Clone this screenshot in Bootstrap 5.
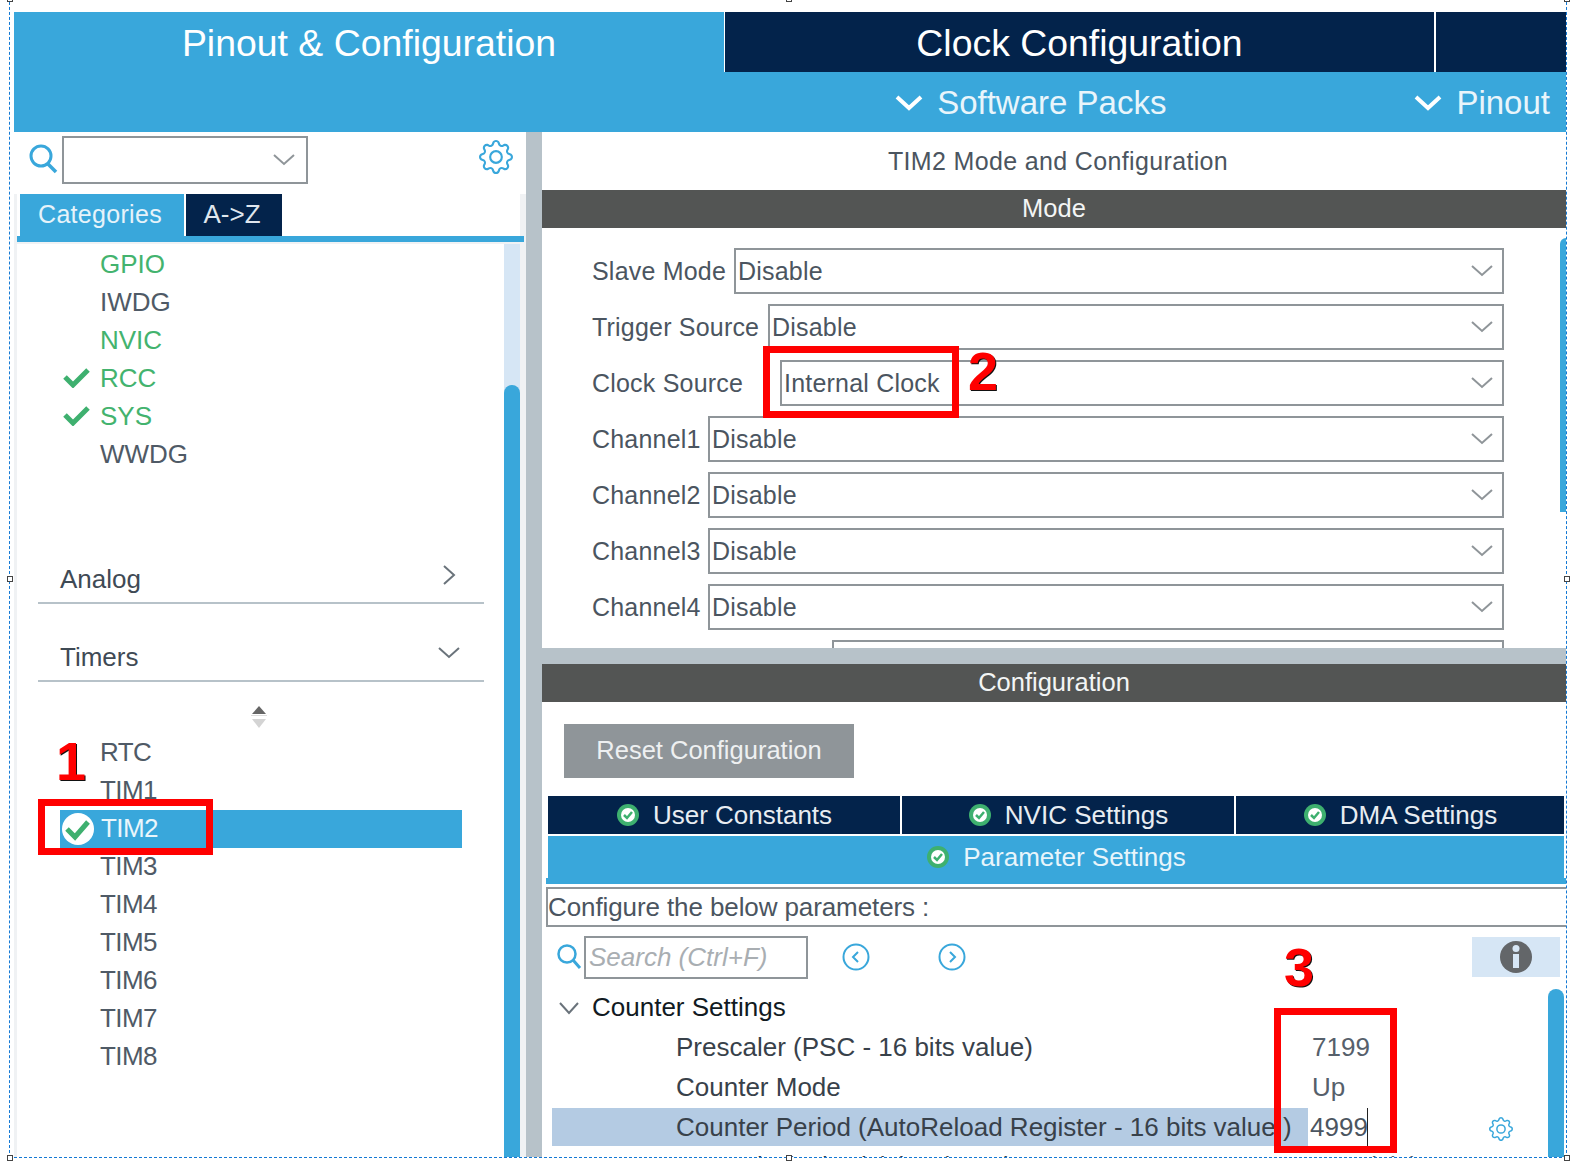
<!DOCTYPE html>
<html lang="en"><head><meta charset="utf-8"><title>STM32CubeMX TIM2</title>
<link href="https://cdn.jsdelivr.net/npm/bootstrap@5.3.0/dist/css/bootstrap.min.css" rel="stylesheet">
<style>
html,body{margin:0;height:1168px;background:#fff;overflow:hidden}
body{font-family:"Liberation Sans",Arial,sans-serif;font-size:26px;color:#4b5560;position:relative}
.appx{position:absolute;left:14px;top:12px;width:1552px;height:1145px;overflow:hidden}
.hdr-row{height:60px;flex:none}
.hdr-tab{font-size:37.4px;color:#fff;line-height:62px;text-align:center}
.hdr-a{width:710px;background:#39a7db}
.hdr-b{width:709px;margin-left:1px;background:#03234b}
.hdr-c{flex:1;margin-left:2px;background:#03234b}
.hdr-menu{background:#39a7db;color:#e9f5fb;font-size:33px;height:60px;flex:none;padding-top:1px}
.hdr-menu svg{width:28px;height:18px;margin-right:14px}
.mn1{margin-right:248px}.mn2{margin-right:16px}
.leftp{width:512px;border-left:3px solid #f0f2f4;border-right:6px solid #f0f2f4;height:1025px;background:#fff;flex:none}
.srch-row{height:62px;margin-left:-3px;margin-right:-6px;background:#fff;padding-left:14px}
.srch-ico{margin-top:11px}
.srch-box{width:246px;height:48px;border:2px solid #8f9599;margin-left:4px;margin-top:4px;padding-right:11px}
.gearx{fill:#39a7db}
.gear1{margin:8px 0 0 171px;width:34px;height:34px}
.tabs-l{height:42px;padding-left:3px}
.tab-cat{width:164px;background:#39a7db;color:#e6f3fa;font-size:25px;letter-spacing:.3px;line-height:40px;text-align:center;padding-right:4px}
.tab-az{width:96px;margin-left:2px;background:#03234b;color:#dfe6ee;font-size:26px;line-height:40px;text-align:center;padding-right:4px}
.tab-line{height:6px;background:#39a7db;margin-right:-4px}
.tab-gap{height:2px;background:#f0f2f4}
.listwrap{height:913px}
.listmain{flex:1;padding-top:0}
.scrollv{width:16px;background:#d6e6f5;flex:none}
.scrollv>div{height:772px;margin-top:141px;background:#39a7db;border-radius:8px 8px 0 0}
.li-x{height:38px;line-height:40px;font-size:26px;padding-left:83px;color:#4f5a66;position:relative}
.li-low{line-height:37px;letter-spacing:-.6px}
.li-g{color:#43b36e}
.li-x>svg{position:absolute;left:46px;top:8px;width:27px;height:22px}
.li-sel{background:#39a7db;color:#eaf6fb;margin-left:43px;width:402px;padding-left:41px}
.li-sel>svg{left:0;top:2px;width:36px;height:34px}
.sec-x{margin-left:21px;width:446px;border-bottom:2px solid #b7c2c9;font-size:26px;color:#3f4a55;height:45px;line-height:40px;padding:0 24px 3px 22px}
.sec-1{margin-top:87px}
.sec-2{margin-top:33px}
.sec-x svg{width:22px;height:22px;margin-bottom:8px}
.updown{height:36px;margin-top:22px;padding-right:3px}
.li-first{margin-top:-6px}
.split-v{width:16px;background:#b7c2c9;flex:none}
.rightp{flex:1;min-width:0}
.modep{height:516px;overflow:hidden}
.ttl{height:58px;line-height:58px;text-align:center;font-size:25px;letter-spacing:.35px;color:#4b5560;padding-left:8px}
.barx{height:38px;line-height:36px;background:#535554;color:#f3f5f5;text-align:center;font-size:25.500px}
.modebody{padding:20px 62px 0 50px;position:relative}
.frow{height:46px;margin-bottom:10px;letter-spacing:.2px;font-size:25px;white-space:nowrap}
.frow>span{flex:none;line-height:46px}
.selx{flex:1;border:2px solid #8f9599;padding:0 9px 0 2px;height:46px;line-height:42px}
.selx svg{width:22px;height:12px}
.w1{width:142px}.w2{width:176px}.w3{width:188px}.w4{width:116px}.w5{width:240px}
.vthumb{position:absolute;right:0;top:106px;width:6px;height:274px;background:#39a7db;border-radius:6px 0 0 0}
.split-h{height:16px;background:#b7c2c9}
.cfgbody{height:481px;overflow:hidden;position:relative}
.btnreset{width:290px;height:54px;margin:22px 0 18px 22px;background:#8f9599;color:#eef0f1;font-size:25.500px;line-height:52px;text-align:center}
.ctabs{height:38px;margin-left:6px;margin-right:2px;gap:2px}
.ctab{background:#03234b;color:#e8edf2;font-size:26px}
.ctab svg,.ptab svg{width:24px;height:24px;margin-right:13px}
.ct1{width:352px}.ct2{width:332px}.ct3{flex:1}
.ptab{height:42px;margin:2px 2px 0 6px;background:#39a7db;color:#e8f5fb;font-size:26px}
.pline{height:6px;background:#39a7db;margin-left:4px}
.cfgnote{height:40px;margin:3px 0 0 4px;border:2px solid #8f9599;border-right:0;line-height:36px;font-size:26px;letter-spacing:-.1px;color:#4b5560}
.srow{height:60px;padding-top:9px;padding-left:14px;position:relative}
.qs{width:28px;height:28px;margin-top:7px}
.sbox{width:224px;height:43px;border:2px solid #8f9599;color:#a9aeb2;font-style:italic;line-height:39px;padding-left:3px;font-size:26px}
.navc{width:30px;height:30px;margin-top:6px}
.nc1{margin-left:33px}.nc2{margin-left:66px}
.infob{position:absolute;right:6px;top:10px;width:88px;height:40px;background:#d6e6f5}
.infob svg{width:34px;height:34px}
.prow{height:40px;line-height:40px;padding-left:134px;position:relative;color:#38414a;font-size:26px;white-space:nowrap}
.prow .valx{position:absolute;left:770px;top:0;color:#56606b}
.prow-h{margin-left:10px;padding-left:124px;width:756px;background:#b4cbe3;height:38px;line-height:38px;margin-top:1px;margin-bottom:1px}
.prow-h .valx{left:756px;width:60px;background:#fff;color:#4b5560;height:38px;padding-left:2px}
.caretx{position:absolute;left:815px;top:0;width:1px;height:38px;background:#222}
.grp{padding-left:50px;color:#111a22}
.grp svg{position:absolute;left:16px;top:12px;width:22px;height:18px}
.prow-cut{margin-top:-1px}
.vthumb2{position:absolute;right:2px;top:287px;width:16px;height:200px;background:#39a7db;border-radius:8px 8px 0 0}
.gear2{position:absolute;left:947px;top:415px;width:24px;height:24px}
.redbox{position:absolute;border:7px solid #f00;pointer-events:none}
.rb1{left:38px;top:799px;width:175px;height:56px}
.rb2{left:763px;top:346px;width:196px;height:72px}
.rb3{left:1274px;top:1008px;width:123px;height:145px}
.numx{position:absolute;color:#f00;font-weight:700;font-size:54px;line-height:54px;text-shadow:1px 1px 0 #111}
.n1{left:56px;top:734px}.n2{left:968px;top:344px}.n3{left:1284px;top:940px}
.selfr{position:absolute;left:9px;top:-3px;width:1558px;height:1161px;border:1px dashed #1479d4;pointer-events:none}
.hdlx{position:absolute;width:6px;height:6px;border:1px solid #444;background:#fff}
.h1x{left:7px;top:1155px}.h2x{left:786px;top:1155px}.h3x{left:1564px;top:1155px}.h4x{left:7px;top:576px}.h5x{left:1564px;top:576px}.h6x{left:786px;top:-4px}.h7x{left:7px;top:-4px}.h8x{left:1564px;top:-4px}
</style></head><body>
<div class="appx d-flex flex-column">
  <div class="hdr-row d-flex">
    <div class="hdr-tab hdr-a">Pinout &amp; Configuration</div>
    <div class="hdr-tab hdr-b">Clock Configuration</div>
    <div class="hdr-tab hdr-c"></div>
  </div>
  <div class="hdr-menu d-flex align-items-center justify-content-end">
    <svg viewBox="0 0 28 18"><path d="M2 3l12 11L26 3" fill="none" stroke="#fff" stroke-width="4"/></svg><span class="mn1">Software Packs</span>
    <svg viewBox="0 0 28 18"><path d="M2 3l12 11L26 3" fill="none" stroke="#fff" stroke-width="4"/></svg><span class="mn2">Pinout</span>
  </div>
  <div class="d-flex flex-grow-1">
    <div class="leftp">
      <div class="srch-row d-flex align-items-start">
        <svg width="30" height="32" viewBox="0 0 30 32" class="srch-ico"><circle cx="13" cy="13" r="10" fill="none" stroke="#39a7db" stroke-width="3"/><path d="M20 21l8 8" stroke="#39a7db" stroke-width="3.5"/></svg>
        <div class="srch-box d-flex align-items-center justify-content-end"><svg width="22" height="12" viewBox="0 0 22 12"><path d="M1 1l10 9 10-9" fill="none" stroke="#8f9599" stroke-width="2"/></svg></div>
        <svg class="gearx gear1" viewBox="0 0 16 16"><path d="M8 4.754a3.246 3.246 0 1 0 0 6.492 3.246 3.246 0 0 0 0-6.492zM5.754 8a2.246 2.246 0 1 1 4.492 0 2.246 2.246 0 0 1-4.492 0z"/><path d="M9.796 1.343c-.527-1.79-3.065-1.79-3.592 0l-.094.319a.873.873 0 0 1-1.255.52l-.292-.16c-1.64-.892-3.433.902-2.54 2.541l.159.292a.873.873 0 0 1-.52 1.255l-.319.094c-1.79.527-1.79 3.065 0 3.592l.319.094a.873.873 0 0 1 .52 1.255l-.16.292c-.892 1.64.901 3.434 2.541 2.54l.292-.159a.873.873 0 0 1 1.255.52l.094.319c.527 1.79 3.065 1.79 3.592 0l.094-.319a.873.873 0 0 1 1.255-.52l.292.16c1.64.893 3.434-.902 2.54-2.541l-.159-.292a.873.873 0 0 1 .52-1.255l.319-.094c1.79-.527 1.79-3.065 0-3.592l-.319-.094a.873.873 0 0 1-.52-1.255l.16-.292c.893-1.64-.902-3.433-2.541-2.54l-.292.159a.873.873 0 0 1-1.255-.52l-.094-.319zm-2.633.283c.246-.835 1.428-.835 1.674 0l.094.319a1.873 1.873 0 0 0 2.693 1.115l.291-.16c.764-.415 1.6.42 1.184 1.185l-.159.292a1.873 1.873 0 0 0 1.116 2.692l.318.094c.835.246.835 1.428 0 1.674l-.319.094a1.873 1.873 0 0 0-1.115 2.693l.16.291c.415.764-.42 1.6-1.185 1.184l-.291-.159a1.873 1.873 0 0 0-2.693 1.116l-.094.318c-.246.835-1.428.835-1.674 0l-.094-.319a1.873 1.873 0 0 0-2.692-1.115l-.292.16c-.764.415-1.6-.42-1.184-1.185l.159-.291A1.873 1.873 0 0 0 1.945 8.93l-.319-.094c-.835-.246-.835-1.428 0-1.674l.319-.094A1.873 1.873 0 0 0 3.06 4.377l-.16-.292c-.415-.764.42-1.6 1.185-1.184l.292.159a1.873 1.873 0 0 0 2.692-1.115l.094-.319z"/></svg>
      </div>
      <div class="tabs-l d-flex"><div class="tab-cat">Categories</div><div class="tab-az">A-&gt;Z</div></div>
      <div class="tab-line"></div>
      <div class="tab-gap"></div>
      <div class="listwrap d-flex">
        <div class="listmain">
          <div class="li-x li-g">GPIO</div>
          <div class="li-x">IWDG</div>
          <div class="li-x li-g">NVIC</div>
          <div class="li-x li-g"><svg viewBox="0 0 27 22"><path d="M2 11l8 8L25 4" fill="none" stroke="#3eb06f" stroke-width="5"/></svg>RCC</div>
          <div class="li-x li-g"><svg viewBox="0 0 27 22"><path d="M2 11l8 8L25 4" fill="none" stroke="#3eb06f" stroke-width="5"/></svg>SYS</div>
          <div class="li-x">WWDG</div>
          <div class="sec-x sec-1 d-flex justify-content-between align-items-center"><span>Analog</span><svg viewBox="0 0 22 22"><path d="M6 2l10 9L6 20" fill="none" stroke="#6a737b" stroke-width="2"/></svg></div>
          <div class="sec-x sec-2 d-flex justify-content-between align-items-center"><span>Timers</span><svg viewBox="0 0 22 22"><path d="M1 6l10 9 10-9" fill="none" stroke="#6a737b" stroke-width="2"/></svg></div>
          <div class="updown d-flex justify-content-center"><svg width="18" height="26" viewBox="0 0 18 26"><path d="M9 2l7 8H2z" fill="#666"/><path d="M1 11.500h16" stroke="#ddd"/><path d="M9 24L2 15h14z" fill="#d4d4d4"/></svg></div>
          <div class="li-x li-low li-first">RTC</div>
          <div class="li-x li-low">TIM1</div>
          <div class="li-x li-low li-sel"><svg viewBox="0 0 36 34"><circle cx="18" cy="17" r="16" fill="#fff"/><path d="M7 17l8 8L28 10" fill="none" stroke="#3eb06f" stroke-width="5"/></svg>TIM2</div>
          <div class="li-x li-low">TIM3</div>
          <div class="li-x li-low">TIM4</div>
          <div class="li-x li-low">TIM5</div>
          <div class="li-x li-low">TIM6</div>
          <div class="li-x li-low">TIM7</div>
          <div class="li-x li-low">TIM8</div>
        </div>
        <div class="scrollv"><div></div></div>
      </div>
    </div>
    <div class="split-v"></div>
    <div class="rightp">
      <div class="modep position-relative">
        <div class="ttl">TIM2 Mode and Configuration</div>
        <div class="barx">Mode</div>
        <div class="modebody">
          <div class="frow d-flex"><span class="w1">Slave Mode</span><div class="selx d-flex justify-content-between align-items-center"><span>Disable</span><svg viewBox="0 0 22 12"><path d="M1 1l10 9 10-9" fill="none" stroke="#8f9599" stroke-width="2"/></svg></div></div>
          <div class="frow d-flex"><span class="w2">Trigger Source</span><div class="selx d-flex justify-content-between align-items-center"><span>Disable</span><svg viewBox="0 0 22 12"><path d="M1 1l10 9 10-9" fill="none" stroke="#8f9599" stroke-width="2"/></svg></div></div>
          <div class="frow d-flex"><span class="w3">Clock Source</span><div class="selx d-flex justify-content-between align-items-center"><span>Internal Clock</span><svg viewBox="0 0 22 12"><path d="M1 1l10 9 10-9" fill="none" stroke="#8f9599" stroke-width="2"/></svg></div></div>
          <div class="frow d-flex"><span class="w4">Channel1</span><div class="selx d-flex justify-content-between align-items-center"><span>Disable</span><svg viewBox="0 0 22 12"><path d="M1 1l10 9 10-9" fill="none" stroke="#8f9599" stroke-width="2"/></svg></div></div>
          <div class="frow d-flex"><span class="w4">Channel2</span><div class="selx d-flex justify-content-between align-items-center"><span>Disable</span><svg viewBox="0 0 22 12"><path d="M1 1l10 9 10-9" fill="none" stroke="#8f9599" stroke-width="2"/></svg></div></div>
          <div class="frow d-flex"><span class="w4">Channel3</span><div class="selx d-flex justify-content-between align-items-center"><span>Disable</span><svg viewBox="0 0 22 12"><path d="M1 1l10 9 10-9" fill="none" stroke="#8f9599" stroke-width="2"/></svg></div></div>
          <div class="frow d-flex"><span class="w4">Channel4</span><div class="selx d-flex justify-content-between align-items-center"><span>Disable</span><svg viewBox="0 0 22 12"><path d="M1 1l10 9 10-9" fill="none" stroke="#8f9599" stroke-width="2"/></svg></div></div>
          <div class="frow d-flex"><span class="w5"></span><div class="selx"></div></div>
        </div>
        <div class="vthumb"></div>
      </div>
      <div class="split-h"></div>
      <div class="barx">Configuration</div>
      <div class="cfgbody">
        <div class="btnreset">Reset Configuration</div>
        <div class="ctabs d-flex">
          <div class="ctab ct1 d-flex align-items-center justify-content-center"><svg viewBox="0 0 24 24"><circle cx="12" cy="12" r="11" fill="#3eb06f"/><circle cx="12" cy="12" r="7" fill="#fff"/><path d="M8 12l3 3 5-6" fill="none" stroke="#3eb06f" stroke-width="2.500"/></svg>User Constants</div>
          <div class="ctab ct2 d-flex align-items-center justify-content-center"><svg viewBox="0 0 24 24"><circle cx="12" cy="12" r="11" fill="#3eb06f"/><circle cx="12" cy="12" r="7" fill="#fff"/><path d="M8 12l3 3 5-6" fill="none" stroke="#3eb06f" stroke-width="2.500"/></svg>NVIC Settings</div>
          <div class="ctab ct3 d-flex align-items-center justify-content-center"><svg viewBox="0 0 24 24"><circle cx="12" cy="12" r="11" fill="#3eb06f"/><circle cx="12" cy="12" r="7" fill="#fff"/><path d="M8 12l3 3 5-6" fill="none" stroke="#3eb06f" stroke-width="2.500"/></svg>DMA Settings</div>
        </div>
        <div class="ptab d-flex align-items-center justify-content-center"><svg viewBox="0 0 24 24"><circle cx="12" cy="12" r="11" fill="#3eb06f"/><circle cx="12" cy="12" r="7" fill="#fff"/><path d="M8 12l3 3 5-6" fill="none" stroke="#3eb06f" stroke-width="2.500"/></svg>Parameter Settings</div>
        <div class="pline"></div>
        <div class="cfgnote">Configure the below parameters :</div>
        <div class="srow d-flex">
          <svg class="qs" viewBox="0 0 28 28"><circle cx="11" cy="11" r="8.500" fill="none" stroke="#39a7db" stroke-width="2.500"/><path d="M17 17l7 8" stroke="#39a7db" stroke-width="3"/></svg>
          <div class="sbox">Search (Ctrl+F)</div>
          <svg class="navc nc1" viewBox="0 0 30 30"><circle cx="15" cy="15" r="12.500" fill="none" stroke="#39a7db" stroke-width="2"/><path d="M17 10l-5 5 5 5" fill="none" stroke="#39a7db" stroke-width="2"/></svg>
          <svg class="navc nc2" viewBox="0 0 30 30"><circle cx="15" cy="15" r="12.500" fill="none" stroke="#39a7db" stroke-width="2"/><path d="M13 10l5 5-5 5" fill="none" stroke="#39a7db" stroke-width="2"/></svg>
          <div class="infob d-flex align-items-center justify-content-center"><svg viewBox="0 0 34 34"><circle cx="17" cy="17" r="16" fill="#636669"/><rect x="14" y="14" width="6" height="14" fill="#d6e6f5"/><circle cx="17" cy="8.500" r="3.500" fill="#d6e6f5"/></svg></div>
        </div>
        <div class="prow grp"><svg viewBox="0 0 22 18"><path d="M2 4l9 10 9-10" fill="none" stroke="#6a737b" stroke-width="2"/></svg>Counter Settings</div>
        <div class="prow">Prescaler (PSC - 16 bits value)<span class="valx">7199</span></div>
        <div class="prow">Counter Mode<span class="valx">Up</span></div>
        <div class="prow prow-h">Counter Period (AutoReload Register - 16 bits value )<span class="valx">4999</span><span class="caretx"></span></div>
        <div class="prow prow-cut">Internal Clock Division (CKD)<span class="valx">No Division</span></div>
        <div class="vthumb2"></div>
        <svg class="gear2 gearx" viewBox="0 0 16 16"><path d="M8 4.754a3.246 3.246 0 1 0 0 6.492 3.246 3.246 0 0 0 0-6.492zM5.754 8a2.246 2.246 0 1 1 4.492 0 2.246 2.246 0 0 1-4.492 0z"/><path d="M9.796 1.343c-.527-1.79-3.065-1.79-3.592 0l-.094.319a.873.873 0 0 1-1.255.52l-.292-.16c-1.64-.892-3.433.902-2.54 2.541l.159.292a.873.873 0 0 1-.52 1.255l-.319.094c-1.79.527-1.79 3.065 0 3.592l.319.094a.873.873 0 0 1 .52 1.255l-.16.292c-.892 1.64.901 3.434 2.541 2.54l.292-.159a.873.873 0 0 1 1.255.52l.094.319c.527 1.79 3.065 1.79 3.592 0l.094-.319a.873.873 0 0 1 1.255-.52l.292.16c1.64.893 3.434-.902 2.54-2.541l-.159-.292a.873.873 0 0 1 .52-1.255l.319-.094c1.79-.527 1.79-3.065 0-3.592l-.319-.094a.873.873 0 0 1-.52-1.255l.16-.292c.893-1.64-.902-3.433-2.541-2.54l-.292.159a.873.873 0 0 1-1.255-.52l-.094-.319zm-2.633.283c.246-.835 1.428-.835 1.674 0l.094.319a1.873 1.873 0 0 0 2.693 1.115l.291-.16c.764-.415 1.6.42 1.184 1.185l-.159.292a1.873 1.873 0 0 0 1.116 2.692l.318.094c.835.246.835 1.428 0 1.674l-.319.094a1.873 1.873 0 0 0-1.115 2.693l.16.291c.415.764-.42 1.6-1.185 1.184l-.291-.159a1.873 1.873 0 0 0-2.693 1.116l-.094.318c-.246.835-1.428.835-1.674 0l-.094-.319a1.873 1.873 0 0 0-2.692-1.115l-.292.16c-.764.415-1.6-.42-1.184-1.185l.159-.291A1.873 1.873 0 0 0 1.945 8.93l-.319-.094c-.835-.246-.835-1.428 0-1.674l.319-.094A1.873 1.873 0 0 0 3.06 4.377l-.16-.292c-.415-.764.42-1.6 1.185-1.184l.292.159a1.873 1.873 0 0 0 2.692-1.115l.094-.319z"/></svg>
      </div>
    </div>
  </div>
</div>
<div class="selfr"></div>
<div class="hdlx h1x"></div><div class="hdlx h2x"></div><div class="hdlx h3x"></div><div class="hdlx h4x"></div><div class="hdlx h5x"></div><div class="hdlx h6x"></div><div class="hdlx h7x"></div><div class="hdlx h8x"></div>
<div class="redbox rb1"></div><div class="redbox rb2"></div><div class="redbox rb3"></div>
<div class="numx n1">1</div><div class="numx n2">2</div><div class="numx n3">3</div>
<script src="https://cdn.jsdelivr.net/npm/bootstrap@5.3.0/dist/js/bootstrap.bundle.min.js"></script>
</body></html>
